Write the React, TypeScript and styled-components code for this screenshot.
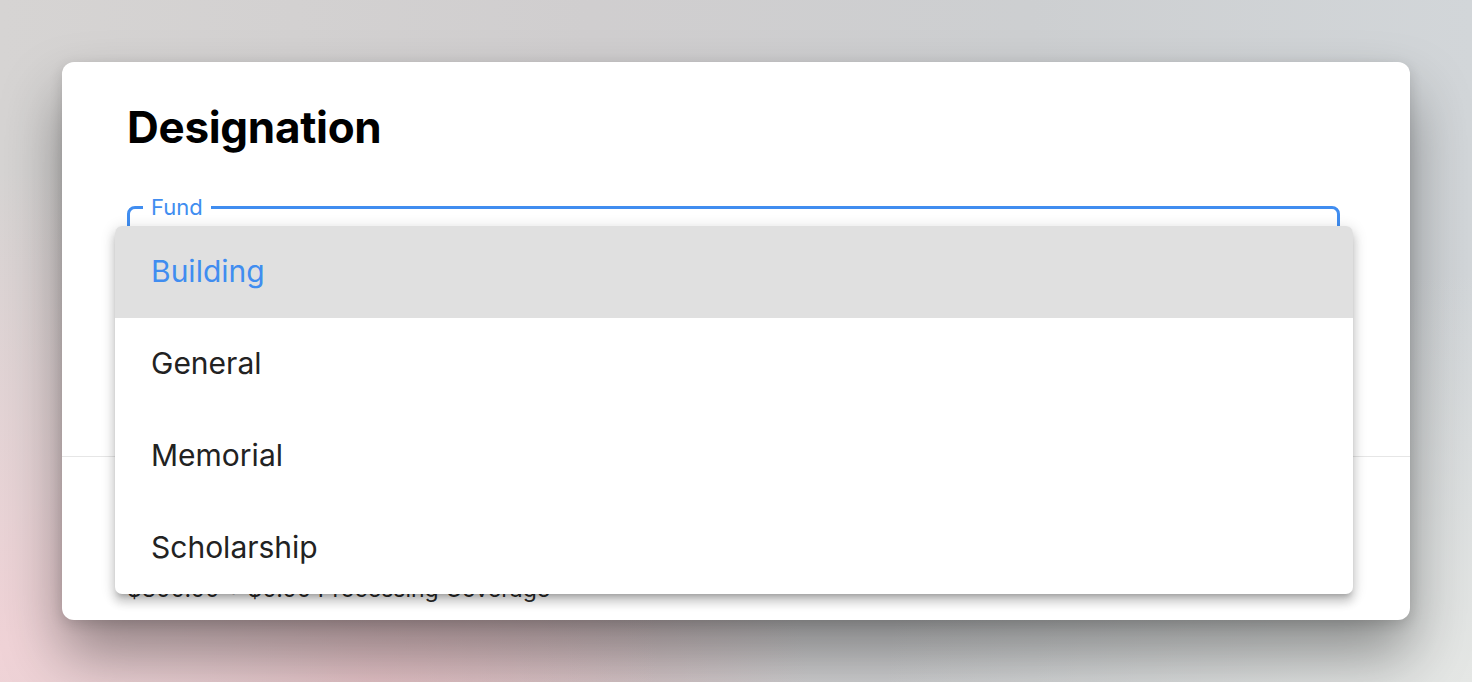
import styled, { createGlobalStyle } from "styled-components";

const GlobalStyle = createGlobalStyle`
  html, body {
    margin: 0;
    padding: 0;
    width: 100%;
    height: 100%;
  }
  body {
    font-family: Inter, "Noto Sans", "Liberation Sans", sans-serif;
    overflow: hidden;
  }
  * {
    box-sizing: border-box;
  }
`;

const BLUE = "#408df0";

const funds = ["Building", "General", "Memorial", "Scholarship"];

export default function App() {
  const selected = "Building";
  return (
    <>
      <GlobalStyle />
      <Backdrop>
        <Card>
          <TopSection>
            <Title>Designation</Title>
            <Field>
              <Legend>Fund</Legend>
              <FieldInner>
                <FieldValue>{selected}</FieldValue>
              </FieldInner>
            </Field>
          </TopSection>
          <Summary>
            <SummaryLine>$300.00 + $0.00 Processing Coverage</SummaryLine>
            <SummaryTotal>$300.00</SummaryTotal>
          </Summary>
          <Menu role="listbox">
            {funds.map((fund) => (
              <MenuItem key={fund} $active={fund === selected}>
                {fund}
              </MenuItem>
            ))}
          </Menu>
        </Card>
      </Backdrop>
    </>
  );
}

const Backdrop = styled.div`
  width: 1472px;
  height: 682px;
  padding: 62px 0 0 62px;
  background:
    radial-gradient(ellipse 45% 70% at 0% 95%, #f0d3d7 0%, rgba(240, 211, 215, 0) 100%),
    radial-gradient(ellipse 30% 40% at 25% 100%, #d9b3b8 0%, rgba(217, 179, 184, 0) 100%),
    radial-gradient(ellipse 40% 60% at 100% 100%, #e5e7e5 0%, rgba(229, 231, 229, 0) 100%),
    linear-gradient(90deg, #d6d4d3 0%, #d0cecf 40%, #cdcfd1 70%, #d2d6d9 100%);
`;

const Card = styled.div`
  position: relative;
  width: 1348px;
  height: 558px;
  background: #ffffff;
  border-radius: 12px;
  overflow: hidden;
  display: flex;
  flex-direction: column;
  box-shadow:
    0 34px 60px rgba(0, 0, 0, 0.38),
    0 4px 14px rgba(0, 0, 0, 0.14);
`;

const TopSection = styled.div`
  padding: 43px 70px 0 65px;
  height: 394px;
  flex: none;
  display: flex;
  flex-direction: column;
`;

const Title = styled.h1`
  margin: 0;
  font-size: 44px;
  line-height: 1;
  font-weight: 700;
  color: #000;
  letter-spacing: -0.3px;
`;

const Field = styled.fieldset`
  margin: 47px 0 0;
  padding: 0;
  min-width: 0;
  border: 3px solid ${BLUE};
  border-radius: 8px;
`;

const Legend = styled.legend`
  margin-left: 13px;
  padding: 0 8px;
  font-size: 22px;
  line-height: 1;
  color: ${BLUE};
`;

const FieldInner = styled.div`
  height: 96px;
  padding: 0 22px;
  display: flex;
  align-items: center;
`;

const FieldValue = styled.span`
  font-size: 30px;
  color: #222;
`;

const Summary = styled.div`
  flex: 1;
  border-top: 1px solid #e6e6e6;
  padding: 118px 70px 0 65px;
`;

const SummaryLine = styled.div`
  font-size: 23px;
  line-height: 28px;
  color: #2a2a2a;
`;

const SummaryTotal = styled.div`
  margin-top: 16px;
  font-size: 23px;
  line-height: 28px;
  font-weight: 600;
  color: #222;
`;

const Menu = styled.ul`
  position: absolute;
  left: 53px;
  top: 164px;
  width: 1238px;
  margin: 0;
  padding: 0;
  list-style: none;
  background: #ffffff;
  border-radius: 7px;
  overflow: hidden;
  box-shadow:
    0 5px 5px -3px rgba(0, 0, 0, 0.2),
    0 8px 10px 1px rgba(0, 0, 0, 0.14),
    0 3px 14px 2px rgba(0, 0, 0, 0.12);
`;

const MenuItem = styled.li<{ $active?: boolean }>`
  height: 92px;
  padding: 0 36px 3px;
  display: flex;
  align-items: center;
  font-size: 30px;
  color: ${(p) => (p.$active ? BLUE : "#222222")};
  background: ${(p) => (p.$active ? "#e0e0e0" : "transparent")};
  cursor: pointer;
`;
